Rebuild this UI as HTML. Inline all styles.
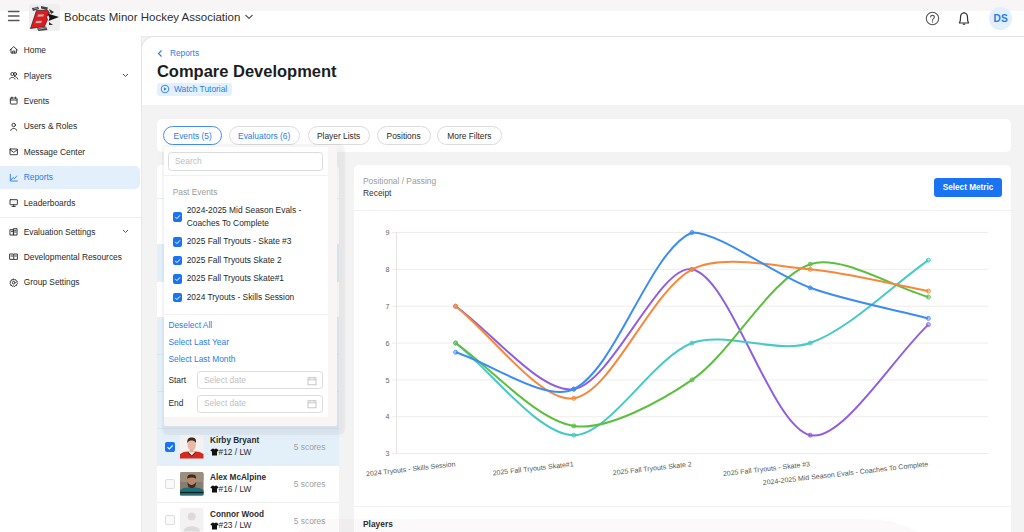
<!DOCTYPE html><html><head><meta charset='utf-8'><style>
*{margin:0;padding:0}
html,body{width:1024px;height:532px;overflow:hidden;background:#f3f3f3}
body{position:relative;font-family:"Liberation Sans",sans-serif}
.r{position:absolute}
.t{position:absolute;white-space:nowrap;line-height:1}
.pill{box-sizing:border-box;border-radius:10px;font-size:8.4px;line-height:16.7px;padding-top:0.6px;text-align:center;background:#fff}
.btn{background:#1a73f0;color:#fff;border-radius:3px;font-size:8.2px;font-weight:700;line-height:19px;text-align:center}
svg.r{overflow:visible}
</style></head><body>
<div class="r" style="left:0.00px;top:0.00px;width:1024.00px;height:532.00px;background:#f3f3f3"></div>
<div class="r" style="left:0.00px;top:0.00px;width:141.00px;height:532.00px;background:#fff"></div>
<div class="r" style="left:141.00px;top:36.00px;width:1.00px;height:496.00px;background:#e8e8e8"></div>
<div class="r" style="left:0.00px;top:0.00px;width:1024.00px;height:36.00px;background:#fff"></div>
<div class="r" style="left:0.00px;top:0.00px;width:1024.00px;height:11.00px;background:#f8f5f6"></div>
<div class="r" style="left:142.00px;top:36.00px;width:882.00px;height:1.00px;background:#ececec"></div>
<div class="r" style="left:141px;top:36px;width:883px;height:69px;background:#fff;border-left:1px solid #e4e4e4;border-top:1px solid #e4e4e4;border-top-left-radius:13px;box-sizing:border-box"></div>
<svg class="r" style="left:6px;top:8px;" width="16" height="16" viewBox="0 0 16 16"><g stroke="#555" stroke-width="1.3" stroke-linecap="round"><line x1="2.5" y1="3.5" x2="13" y2="3.5"/><line x1="2.5" y1="8" x2="13" y2="8"/><line x1="2.5" y1="12.5" x2="13" y2="12.5"/></g></svg>
<div class="r" style="left:29.00px;top:4.00px;width:31.00px;height:27.00px;background:#efefef;border-radius:3px"></div>
<svg class="r" style="left:29px;top:4px;" width="31" height="27" viewBox="0 0 31 27">
<path d="M3 4 L9 2.5 L10 5 L4 7 Z" fill="#333"/><path d="M4 3.5 L8.5 2.8 M4.5 5 L9 4" stroke="#fff" stroke-width="0.5"/>
<path d="M12 2 L19 3.5 L18 6 L12 4.5 Z" fill="#444"/>
<path d="M7.5 6.5 L18.5 6 L20.5 9 L17.5 13 L18.5 15.5 L15.5 22.5 L1.5 24.5 Z" fill="#e3191c" stroke="#222" stroke-width="0.7"/>
<path d="M9 10.5 L15 10.3 L14.3 12.5 L8.3 12.7 Z M7 17 L13 16.8 L12.3 19 L6.3 19.2 Z" fill="#b5b5b5"/>
<path d="M18.5 9.5 L30 13 L19.5 17 L20.5 14 Z" fill="#111"/>
<path d="M20 5 L25 8 L22 10 Z" fill="#333"/>
<path d="M20 18 L24 21 L20 21 Z" fill="#333"/>
<path d="M8 24.5 L17 22.5 L18.5 26 L9.5 27 Z" fill="#444"/><path d="M9.5 25.3 L17 23.8" stroke="#fff" stroke-width="0.5"/>
</svg>
<div class="t" style="left:64.00px;top:11.57px;font-size:11.5px;color:#2e2e2e;font-weight:400;">Bobcats Minor Hockey Association</div>
<svg class="r" style="left:244px;top:13px;" width="10" height="8" viewBox="0 0 10 8"><path d="M1.5 2 L5 5.5 L8.5 2" stroke="#555" stroke-width="1.1" fill="none"/></svg>
<svg class="r" style="left:925px;top:11px;" width="16" height="16" viewBox="0 0 16 16"><circle cx="7.5" cy="7.5" r="6.2" stroke="#555" stroke-width="1.1" fill="none"/><path d="M5.6 6 C5.6 3.8 9.4 3.8 9.4 6 C9.4 7.6 7.5 7.6 7.5 9.2" stroke="#555" stroke-width="1.1" fill="none" stroke-linecap="round"/><circle cx="7.5" cy="11" r="0.7" fill="#555"/></svg>
<svg class="r" style="left:957px;top:11px;" width="14" height="16" viewBox="0 0 14 16"><path d="M2.5 12 L2.8 11 C3.5 10 3.5 9 3.5 6.5 C3.5 3.8 5 2 7 2 C9 2 10.5 3.8 10.5 6.5 C10.5 9 10.5 10 11.2 11 L11.5 12 Z" stroke="#333" stroke-width="1.2" fill="none" stroke-linejoin="round"/><path d="M5.8 13.2 L8.2 13.2" stroke="#333" stroke-width="1.2"/><path d="M7 1 L7 2" stroke="#333" stroke-width="1.2"/></svg>
<div class="r" style="left:989px;top:7px;width:23.4px;height:23.4px;border-radius:50%;background:#e2f0fd"></div>
<div class="t" style="left:1000.70px;top:14.27px;font-size:10.2px;color:#2a7de9;font-weight:700;transform:translateX(-50%)">DS</div>
<div class="r" style="left:0.00px;top:166.00px;width:139.50px;height:23.20px;background:#e3f0fb;border-radius:0 5px 5px 0"></div>
<div class="r" style="left:0.00px;top:217.00px;width:141.00px;height:1.00px;background:#eee"></div>
<div class="t" style="left:23.70px;top:45.79px;font-size:8.4px;color:#2a2a2a;font-weight:400;">Home</div>
<svg class="r" style="left:9.3px;top:45.30px" width="9.4" height="9.4" viewBox="0 0 14 14"><g stroke="#2a2a2a" stroke-width="1.35" fill="none" stroke-linejoin="round" stroke-linecap="round"><path d="M1.5 7.5 L7 2.5 L12.5 7.5 M3 6.5 L3 12 L11 12 L11 6.5 M5.5 12 L5.5 9 L8.5 9 L8.5 12" /></g></svg>
<div class="t" style="left:23.70px;top:71.79px;font-size:8.4px;color:#2a2a2a;font-weight:400;">Players</div>
<svg class="r" style="left:9.3px;top:71.30px" width="9.4" height="9.4" viewBox="0 0 14 14"><g stroke="#2a2a2a" stroke-width="1.35" fill="none" stroke-linejoin="round" stroke-linecap="round"><circle cx="5" cy="4.5" r="2.3"/><path d="M1 12 C1.5 8.5 8.5 8.5 9 12"/><circle cx="9" cy="4.5" r="2.3"/><path d="M8 8 C10.5 8.5 12.5 9.5 13 12"/></g></svg>
<div class="t" style="left:23.70px;top:96.89px;font-size:8.4px;color:#2a2a2a;font-weight:400;">Events</div>
<svg class="r" style="left:9.3px;top:96.40px" width="9.4" height="9.4" viewBox="0 0 14 14"><g stroke="#2a2a2a" stroke-width="1.35" fill="none" stroke-linejoin="round" stroke-linecap="round"><rect x="2" y="3" width="10" height="9" rx="1"/><path d="M2 6 L12 6 M4.5 1.5 L4.5 4 M9.5 1.5 L9.5 4"/></g></svg>
<div class="t" style="left:23.70px;top:122.49px;font-size:8.4px;color:#2a2a2a;font-weight:400;">Users &amp; Roles</div>
<svg class="r" style="left:9.3px;top:122.00px" width="9.4" height="9.4" viewBox="0 0 14 14"><g stroke="#2a2a2a" stroke-width="1.35" fill="none" stroke-linejoin="round" stroke-linecap="round"><circle cx="7" cy="4.5" r="2.6"/><path d="M2.5 12.5 C3 8.5 11 8.5 11.5 12.5"/></g></svg>
<div class="t" style="left:23.70px;top:147.69px;font-size:8.4px;color:#2a2a2a;font-weight:400;">Message Center</div>
<svg class="r" style="left:9.3px;top:147.20px" width="9.4" height="9.4" viewBox="0 0 14 14"><g stroke="#2a2a2a" stroke-width="1.35" fill="none" stroke-linejoin="round" stroke-linecap="round"><rect x="1.5" y="3" width="11" height="8.5" rx="0.5"/><path d="M1.5 4 L7 8 L12.5 4"/></g></svg>
<div class="t" style="left:23.70px;top:173.39px;font-size:8.4px;color:#2a7de9;font-weight:400;">Reports</div>
<svg class="r" style="left:9.3px;top:172.90px" width="9.4" height="9.4" viewBox="0 0 14 14"><g stroke="#2a7de9" stroke-width="1.35" fill="none" stroke-linejoin="round" stroke-linecap="round"><path d="M2 2 L2 12 L12.5 12 M3.5 10 L6 6.5 L8 8.5 L11.5 4.5"/></g></svg>
<div class="t" style="left:23.70px;top:198.89px;font-size:8.4px;color:#2a2a2a;font-weight:400;">Leaderboards</div>
<svg class="r" style="left:9.3px;top:198.40px" width="9.4" height="9.4" viewBox="0 0 14 14"><g stroke="#2a2a2a" stroke-width="1.35" fill="none" stroke-linejoin="round" stroke-linecap="round"><rect x="1.5" y="2.5" width="11" height="7.5" rx="0.5"/><path d="M7 10 L7 12.5 M4.5 12.5 L9.5 12.5"/></g></svg>
<div class="t" style="left:23.70px;top:227.69px;font-size:8.4px;color:#2a2a2a;font-weight:400;">Evaluation Settings</div>
<svg class="r" style="left:9.3px;top:227.20px" width="9.4" height="9.4" viewBox="0 0 14 14"><g stroke="#2a2a2a" stroke-width="1.35" fill="none" stroke-linejoin="round" stroke-linecap="round"><rect x="2" y="4" width="5" height="8"/><rect x="7" y="2.5" width="5" height="9.5"/><path d="M3.5 6.5 L5.5 6.5 M8.5 5 L10.5 5 M8.5 7.5 L10.5 7.5"/></g></svg>
<div class="t" style="left:23.70px;top:252.69px;font-size:8.4px;color:#2a2a2a;font-weight:400;">Developmental Resources</div>
<svg class="r" style="left:9.3px;top:252.20px" width="9.4" height="9.4" viewBox="0 0 14 14"><g stroke="#2a2a2a" stroke-width="1.35" fill="none" stroke-linejoin="round" stroke-linecap="round"><path d="M1.5 3 L6.5 3 L7 3.5 L7.5 3 L12.5 3 L12.5 11 L7.5 11 L7 11.5 L6.5 11 L1.5 11 Z M7 3.5 L7 11"/><path d="M3 6 L5.5 6 M8.5 6 L11 6"/></g></svg>
<div class="t" style="left:23.70px;top:278.39px;font-size:8.4px;color:#2a2a2a;font-weight:400;">Group Settings</div>
<svg class="r" style="left:9.3px;top:277.90px" width="9.4" height="9.4" viewBox="0 0 14 14"><g stroke="#2a2a2a" stroke-width="1.35" fill="none" stroke-linejoin="round" stroke-linecap="round"><circle cx="7" cy="7" r="2"/><path d="M7 1.5 L8.2 2.8 L10 2.4 L10.5 4.2 L12.3 4.8 L11.8 6.6 L12.8 8 L11.4 9.2 L11.5 11 L9.6 11.2 L8.6 12.7 L7 11.8 L5.4 12.7 L4.4 11.2 L2.5 11 L2.6 9.2 L1.2 8 L2.2 6.6 L1.7 4.8 L3.5 4.2 L4 2.4 L5.8 2.8 Z"/></g></svg>
<svg class="r" style="left:121px;top:71.9px;" width="9" height="7" viewBox="0 0 9 7"><path d="M2 2 L4.5 4.5 L7 2" stroke="#555" stroke-width="1" fill="none"/></svg>
<svg class="r" style="left:121px;top:227.8px;" width="9" height="7" viewBox="0 0 9 7"><path d="M2 2 L4.5 4.5 L7 2" stroke="#555" stroke-width="1" fill="none"/></svg>
<svg class="r" style="left:156px;top:49px;" width="8" height="9" viewBox="0 0 8 9"><path d="M5.5 1.5 L2.5 4.5 L5.5 7.5" stroke="#2a7de9" stroke-width="1.1" fill="none"/></svg>
<div class="t" style="left:170.00px;top:49.27px;font-size:8.3px;color:#2a7de9;font-weight:400;">Reports</div>
<div class="t" style="left:156.90px;top:63.03px;font-size:16.5px;color:#1d1d1d;font-weight:700;">Compare Development</div>
<div class="r" style="left:157.00px;top:82.50px;width:75.00px;height:13.10px;background:#e4f0fc;border-radius:3px"></div>
<svg class="r" style="left:160px;top:84px;" width="10" height="10" viewBox="0 0 10 10"><circle cx="5" cy="5" r="3.8" stroke="#2a7de9" stroke-width="0.9" fill="none"/><path d="M4 3.3 L6.6 5 L4 6.7 Z" fill="#2a7de9"/></svg>
<div class="t" style="left:174.00px;top:84.89px;font-size:8.4px;color:#2a7de9;font-weight:400;">Watch Tutorial</div>
<div class="r" style="left:157.00px;top:119.00px;width:854.00px;height:33.00px;background:#fff;border-radius:5px"></div>
<div class="r pill" style="left:163.4px;top:126px;width:58.599999999999994px;height:18.7px;border:1px solid #4a90f0;color:#2a7de9">Events (5)</div>
<div class="r pill" style="left:228.6px;top:126px;width:71.1px;height:18.7px;border:1px solid #dcdcdc;color:#2a7de9">Evaluators (6)</div>
<div class="r pill" style="left:307.5px;top:126px;width:62.19999999999999px;height:18.7px;border:1px solid #dcdcdc;color:#2a2a2a">Player Lists</div>
<div class="r pill" style="left:376.6px;top:126px;width:54.0px;height:18.7px;border:1px solid #dcdcdc;color:#2a2a2a">Positions</div>
<div class="r pill" style="left:437.2px;top:126px;width:64.40000000000003px;height:18.7px;border:1px solid #dcdcdc;color:#2a2a2a">More Filters</div>
<div class="r" style="left:157.00px;top:165.00px;width:182.00px;height:367.00px;background:#fff;border-radius:5px 5px 0 0"></div>
<div class="r" style="left:157.00px;top:198.00px;width:182.00px;height:1.00px;background:#eee"></div>
<div class="r" style="left:157.00px;top:244.40px;width:182.00px;height:36.60px;background:#e3eff9"></div>
<div class="r" style="left:157.00px;top:317.00px;width:182.00px;height:148.00px;background:#e3eff9"></div>
<div class="r" style="left:157.00px;top:354.00px;width:182.00px;height:1.00px;background:#d9e6f1"></div>
<div class="r" style="left:157.00px;top:391.00px;width:182.00px;height:1.00px;background:#d9e6f1"></div>
<div class="r" style="left:157.00px;top:428.00px;width:182.00px;height:1.00px;background:#d9e6f1"></div>
<div class="r" style="left:157.00px;top:281.00px;width:182.00px;height:1.00px;background:#f0eded"></div>
<div class="r" style="left:157.00px;top:317.00px;width:182.00px;height:1.00px;background:#f0eded"></div>
<div class="r" style="left:157.00px;top:465.00px;width:182.00px;height:1.00px;background:#f0eded"></div>
<div class="r" style="left:157.00px;top:501.50px;width:182.00px;height:1.00px;background:#f0eded"></div>
<div class="r" style="left:165.20px;top:441.50px;width:10.10px;height:10.00px;background:#1a73f0;border-radius:2px"></div>
<svg class="r" style="left:165px;top:441.5px;" width="10" height="10" viewBox="0 0 10 10"><path d="M2.5 5.2 L4.3 7 L7.8 3.3" stroke="#fff" stroke-width="1.1" fill="none"/></svg>
<svg class="r" style="left:179.5px;top:434.7px;" width="23.5" height="23.5" viewBox="0 0 23.5 23.5"><rect width="23.5" height="23.5" rx="2" fill="#f4f1f0"/><path d="M0 23.5 L0 19 C4 16 8 16 11.7 17 C15.5 16 19.5 16 23.5 19 L23.5 23.5 Z" fill="#d42a1f"/><path d="M8.5 17 L11.7 20.5 L15 17" fill="#fff"/><path d="M8 17.5 L11.7 21 L15.5 17.5" stroke="#222" stroke-width="0.8" fill="none"/><ellipse cx="11.7" cy="10" rx="4.2" ry="5.5" fill="#e8b9a4"/><path d="M7.3 8 C7 3.5 9 2.5 11.7 2.5 C14.5 2.5 16.5 3.5 16 8 C15 6 13 5.5 11.7 5.5 C10 5.5 8.5 6 7.3 8 Z" fill="#3a2a22"/><rect x="10" y="14.5" width="3.4" height="3" fill="#e0ad98"/></svg>
<div class="t" style="left:210.00px;top:437.06px;font-size:8.2px;color:#2b2b2b;font-weight:700;">Kirby Bryant</div>
<svg class="r" style="left:209.5px;top:448.1px;" width="9" height="8" viewBox="0 0 9 8"><path d="M2.2 0.8 L3.3 0.5 C3.8 1.6 5.2 1.6 5.7 0.5 L6.8 0.8 L8.6 2.2 L7.7 3.6 L7 3.3 L7 7.6 L2 7.6 L2 3.3 L1.3 3.6 L0.4 2.2 Z" fill="#111"/></svg>
<div class="t" style="left:218.50px;top:447.59px;font-size:8.4px;color:#2b2b2b;font-weight:400;">#12 / LW</div>
<div class="t" style="left:293.80px;top:443.19px;font-size:8.4px;color:#a0a0a0;font-weight:400;">5 scores</div>
<div class="r" style="left:165.20px;top:478.50px;width:10.10px;height:10.00px;background:#fafafa;border:1px solid #dedede;border-radius:2px;box-sizing:border-box"></div>
<svg class="r" style="left:179.5px;top:471.7px;" width="23.5" height="23.5" viewBox="0 0 23.5 23.5"><rect width="23.5" height="23.5" rx="2" fill="#8a7c6e"/><rect width="23.5" height="10" rx="2" fill="#9c8f80"/><path d="M0 23.5 L0 18 C4 15 8 15 11.7 16 C15.5 15 19.5 15 23.5 18 L23.5 23.5 Z" fill="#1f6f78"/><path d="M0 20.5 L23.5 20.5" stroke="#1a1a1a" stroke-width="1.2"/><ellipse cx="11.7" cy="9.5" rx="4.3" ry="5.5" fill="#b98868"/><path d="M7.5 10 C7.5 15 9 16 11.7 16 C14.5 16 16 15 16 10 C15 12 13 13 11.7 13 C10 13 8.5 12 7.5 10 Z" fill="#3e2a1e"/><path d="M7.3 7 C7 3 9 2.5 11.7 2.5 C14.5 2.5 16.5 3 16 7 C15 5 8.5 5 7.3 7 Z" fill="#3e2a1e"/></svg>
<div class="t" style="left:210.00px;top:474.06px;font-size:8.2px;color:#2b2b2b;font-weight:700;">Alex McAlpine</div>
<svg class="r" style="left:209.5px;top:485.1px;" width="9" height="8" viewBox="0 0 9 8"><path d="M2.2 0.8 L3.3 0.5 C3.8 1.6 5.2 1.6 5.7 0.5 L6.8 0.8 L8.6 2.2 L7.7 3.6 L7 3.3 L7 7.6 L2 7.6 L2 3.3 L1.3 3.6 L0.4 2.2 Z" fill="#111"/></svg>
<div class="t" style="left:218.50px;top:484.59px;font-size:8.4px;color:#2b2b2b;font-weight:400;">#16 / LW</div>
<div class="t" style="left:293.80px;top:480.19px;font-size:8.4px;color:#a0a0a0;font-weight:400;">5 scores</div>
<div class="r" style="left:165.20px;top:515.00px;width:10.10px;height:10.00px;background:#fafafa;border:1px solid #dedede;border-radius:2px;box-sizing:border-box"></div>
<svg class="r" style="left:179.5px;top:508.2px;" width="23.5" height="23.5" viewBox="0 0 23.5 23.5"><rect width="23.5" height="23.5" rx="2" fill="#f3f1f1"/><circle cx="11.7" cy="8.5" r="4" fill="#dcdada"/><path d="M3.5 23.5 C4 16.5 19.5 16.5 20 23.5 Z" fill="#dcdada"/></svg>
<div class="t" style="left:210.00px;top:510.56px;font-size:8.2px;color:#2b2b2b;font-weight:700;">Connor Wood</div>
<svg class="r" style="left:209.5px;top:521.6px;" width="9" height="8" viewBox="0 0 9 8"><path d="M2.2 0.8 L3.3 0.5 C3.8 1.6 5.2 1.6 5.7 0.5 L6.8 0.8 L8.6 2.2 L7.7 3.6 L7 3.3 L7 7.6 L2 7.6 L2 3.3 L1.3 3.6 L0.4 2.2 Z" fill="#111"/></svg>
<div class="t" style="left:218.50px;top:521.09px;font-size:8.4px;color:#2b2b2b;font-weight:400;">#23 / LW</div>
<div class="t" style="left:293.80px;top:516.69px;font-size:8.4px;color:#a0a0a0;font-weight:400;">5 scores</div>
<div class="r" style="left:354.00px;top:165.00px;width:657.00px;height:367.00px;background:#fff;border-radius:5px 5px 0 0"></div>
<div class="t" style="left:363.00px;top:176.89px;font-size:8.4px;color:#9a9a9a;font-weight:400;">Positional / Passing</div>
<div class="t" style="left:363.00px;top:188.89px;font-size:8.4px;color:#333;font-weight:400;">Receipt</div>
<div class="r btn" style="left:934px;top:178px;width:68px;height:19px">Select Metric</div>
<div class="r" style="left:354.00px;top:209.70px;width:657.00px;height:1.00px;background:#f0eeee"></div>
<div class="r" style="left:354.00px;top:505.50px;width:657.00px;height:1.00px;background:#f2f0f0"></div>
<div class="t" style="left:363.00px;top:519.69px;font-size:8.4px;color:#2b2b2b;font-weight:700;">Players</div>
<svg class="r" style="left:0px;top:0px;font-family:'Liberation Sans',sans-serif" width="1024" height="532" viewBox="0 0 1024 532"><line x1="392" y1="453.60" x2="988.0" y2="453.60" stroke="#efebeb" stroke-width="1"/><line x1="392" y1="416.75" x2="988.0" y2="416.75" stroke="#efebeb" stroke-width="1"/><line x1="392" y1="379.90" x2="988.0" y2="379.90" stroke="#efebeb" stroke-width="1"/><line x1="392" y1="343.05" x2="988.0" y2="343.05" stroke="#efebeb" stroke-width="1"/><line x1="392" y1="306.20" x2="988.0" y2="306.20" stroke="#efebeb" stroke-width="1"/><line x1="392" y1="269.35" x2="988.0" y2="269.35" stroke="#efebeb" stroke-width="1"/><line x1="392" y1="232.50" x2="988.0" y2="232.50" stroke="#efebeb" stroke-width="1"/><line x1="396.5" y1="232.5" x2="396.5" y2="453.6" stroke="#e6e3e3" stroke-width="1"/><text x="389.5" y="456.20" font-size="7.2" text-anchor="end" fill="#666">3</text><text x="389.5" y="419.35" font-size="7.2" text-anchor="end" fill="#666">4</text><text x="389.5" y="382.50" font-size="7.2" text-anchor="end" fill="#666">5</text><text x="389.5" y="345.65" font-size="7.2" text-anchor="end" fill="#666">6</text><text x="389.5" y="308.80" font-size="7.2" text-anchor="end" fill="#666">7</text><text x="389.5" y="271.95" font-size="7.2" text-anchor="end" fill="#666">8</text><text x="389.5" y="235.10" font-size="7.2" text-anchor="end" fill="#666">9</text><text transform="translate(455.60,466.20) rotate(-6.5)" font-size="7" text-anchor="end" fill="#555">2024 Tryouts - Skills Session</text><text transform="translate(573.80,466.20) rotate(-6.5)" font-size="7" text-anchor="end" fill="#555">2025 Fall Tryouts Skate#1</text><text transform="translate(692.00,466.20) rotate(-6.5)" font-size="7" text-anchor="end" fill="#555">2025 Fall Tryouts Skate 2</text><text transform="translate(810.20,466.20) rotate(-6.5)" font-size="7" text-anchor="end" fill="#555">2025 Fall Tryouts - Skate #3</text><text transform="translate(928.40,466.20) rotate(-6.5)" font-size="7" text-anchor="end" fill="#555">2024-2025 Mid Season Evals - Coaches To Complete</text><path d="M455.60,306.20 C491.06,331.07 541.05,394.22 573.80,389.11 C611.97,383.16 659.91,263.10 692.00,269.35 C730.83,276.92 770.68,425.94 810.20,435.18 C841.60,442.52 892.94,357.79 928.40,324.62" stroke="#8f5fe0" stroke-width="2" fill="none"/>
<circle cx="455.60" cy="306.20" r="2" fill="#8f5fe0" fill-opacity="0.35" stroke="#8f5fe0" stroke-width="0.9"/>
<circle cx="573.80" cy="389.11" r="2" fill="#8f5fe0" fill-opacity="0.35" stroke="#8f5fe0" stroke-width="0.9"/>
<circle cx="692.00" cy="269.35" r="2" fill="#8f5fe0" fill-opacity="0.35" stroke="#8f5fe0" stroke-width="0.9"/>
<circle cx="810.20" cy="435.18" r="2" fill="#8f5fe0" fill-opacity="0.35" stroke="#8f5fe0" stroke-width="0.9"/>
<circle cx="928.40" cy="324.62" r="2" fill="#8f5fe0" fill-opacity="0.35" stroke="#8f5fe0" stroke-width="0.9"/>
<path d="M455.60,343.05 C491.06,370.69 538.34,435.18 573.80,435.18 C609.26,435.18 652.35,358.50 692.00,343.05 C723.27,330.86 778.28,354.25 810.20,343.05 C849.20,329.37 892.94,285.01 928.40,260.14" stroke="#47c9c6" stroke-width="2" fill="none"/>
<circle cx="455.60" cy="343.05" r="2" fill="#47c9c6" fill-opacity="0.35" stroke="#47c9c6" stroke-width="0.9"/>
<circle cx="573.80" cy="435.18" r="2" fill="#47c9c6" fill-opacity="0.35" stroke="#47c9c6" stroke-width="0.9"/>
<circle cx="692.00" cy="343.05" r="2" fill="#47c9c6" fill-opacity="0.35" stroke="#47c9c6" stroke-width="0.9"/>
<circle cx="810.20" cy="343.05" r="2" fill="#47c9c6" fill-opacity="0.35" stroke="#47c9c6" stroke-width="0.9"/>
<circle cx="928.40" cy="260.14" r="2" fill="#47c9c6" fill-opacity="0.35" stroke="#47c9c6" stroke-width="0.9"/>
<path d="M455.60,343.05 C491.06,367.92 536.05,420.08 573.80,425.96 C606.97,431.13 661.22,400.97 692.00,379.90 C732.14,352.43 769.48,278.47 810.20,264.19 C840.40,253.60 892.94,287.15 928.40,296.99" stroke="#5dbf3f" stroke-width="2" fill="none"/>
<circle cx="455.60" cy="343.05" r="2" fill="#5dbf3f" fill-opacity="0.35" stroke="#5dbf3f" stroke-width="0.9"/>
<circle cx="573.80" cy="425.96" r="2" fill="#5dbf3f" fill-opacity="0.35" stroke="#5dbf3f" stroke-width="0.9"/>
<circle cx="692.00" cy="379.90" r="2" fill="#5dbf3f" fill-opacity="0.35" stroke="#5dbf3f" stroke-width="0.9"/>
<circle cx="810.20" cy="264.19" r="2" fill="#5dbf3f" fill-opacity="0.35" stroke="#5dbf3f" stroke-width="0.9"/>
<circle cx="928.40" cy="296.99" r="2" fill="#5dbf3f" fill-opacity="0.35" stroke="#5dbf3f" stroke-width="0.9"/>
<path d="M455.60,306.20 C491.06,333.84 541.08,403.43 573.80,398.33 C612.00,392.37 649.68,292.44 692.00,269.35 C720.60,253.75 775.03,266.12 810.20,269.35 C845.95,272.64 892.94,284.57 928.40,291.09" stroke="#f6883a" stroke-width="2" fill="none"/>
<circle cx="455.60" cy="306.20" r="2" fill="#f6883a" fill-opacity="0.35" stroke="#f6883a" stroke-width="0.9"/>
<circle cx="573.80" cy="398.33" r="2" fill="#f6883a" fill-opacity="0.35" stroke="#f6883a" stroke-width="0.9"/>
<circle cx="692.00" cy="269.35" r="2" fill="#f6883a" fill-opacity="0.35" stroke="#f6883a" stroke-width="0.9"/>
<circle cx="810.20" cy="269.35" r="2" fill="#f6883a" fill-opacity="0.35" stroke="#f6883a" stroke-width="0.9"/>
<circle cx="928.40" cy="291.09" r="2" fill="#f6883a" fill-opacity="0.35" stroke="#f6883a" stroke-width="0.9"/>
<path d="M455.60,352.26 C491.06,363.32 546.36,403.01 573.80,389.11 C617.28,367.08 649.41,250.76 692.00,232.50 C720.33,232.50 773.56,274.47 810.20,287.77 C844.48,300.23 892.94,309.18 928.40,318.36" stroke="#3b8ef0" stroke-width="2" fill="none"/>
<circle cx="455.60" cy="352.26" r="2" fill="#3b8ef0" fill-opacity="0.35" stroke="#3b8ef0" stroke-width="0.9"/>
<circle cx="573.80" cy="389.11" r="2" fill="#3b8ef0" fill-opacity="0.35" stroke="#3b8ef0" stroke-width="0.9"/>
<circle cx="692.00" cy="232.50" r="2" fill="#3b8ef0" fill-opacity="0.35" stroke="#3b8ef0" stroke-width="0.9"/>
<circle cx="810.20" cy="287.77" r="2" fill="#3b8ef0" fill-opacity="0.35" stroke="#3b8ef0" stroke-width="0.9"/>
<circle cx="928.40" cy="318.36" r="2" fill="#3b8ef0" fill-opacity="0.35" stroke="#3b8ef0" stroke-width="0.9"/></svg>
<div class="r" style="left:290px;top:518.5px;width:645px;height:60px;border-radius:40px 70px 0 0/30px 40px 0 0;background:rgba(140,90,90,0.035)"></div>
<div class="r" style="left:163.6px;top:144.8px;width:173.6px;height:281.6px;background:#f8f5f5;border-radius:2px;box-shadow:3px 4px 1px 5px rgba(0,0,0,0.035), 3px 5px 6px 5px rgba(0,0,0,0.02)"></div>
<div class="r" style="left:163.60px;top:147.30px;width:164.10px;height:269.40px;background:#fff"></div>
<div class="r" style="left:168.4px;top:152px;width:154.6px;height:18.5px;border:1px solid #dcdcdc;border-radius:3.5px;box-sizing:border-box"></div>
<div class="t" style="left:175.00px;top:156.69px;font-size:8.4px;color:#bdbdbd;font-weight:400;">Search</div>
<div class="r" style="left:164.00px;top:175.00px;width:163.50px;height:1.00px;background:#f2f0f0"></div>
<div class="t" style="left:172.70px;top:187.59px;font-size:8.4px;color:#9c9c9c;font-weight:400;">Past Events</div>
<div class="r" style="left:172.70px;top:212.00px;width:9.00px;height:9.50px;background:#1a73f0;border-radius:2px"></div>
<svg class="r" style="left:172.7px;top:212px;" width="9" height="9.5" viewBox="0 0 9 9.5"><path d="M2.2 4.9 L3.9 6.6 L7 3.3" stroke="#fff" stroke-width="1" fill="none"/></svg>
<div class="t" style="left:186.70px;top:206.39px;font-size:8.4px;color:#2a2a2a;font-weight:400;">2024-2025 Mid Season Evals -</div>
<div class="t" style="left:186.70px;top:219.09px;font-size:8.4px;color:#2a2a2a;font-weight:400;">Coaches To Complete</div>
<div class="r" style="left:172.70px;top:237.10px;width:9.00px;height:9.50px;background:#1a73f0;border-radius:2px"></div>
<svg class="r" style="left:172.7px;top:237.10000000000002px;" width="9" height="9.5" viewBox="0 0 9 9.5"><path d="M2.2 4.9 L3.9 6.6 L7 3.3" stroke="#fff" stroke-width="1" fill="none"/></svg>
<div class="t" style="left:186.70px;top:237.19px;font-size:8.4px;color:#2a2a2a;font-weight:400;">2025 Fall Tryouts - Skate #3</div>
<div class="r" style="left:172.70px;top:255.60px;width:9.00px;height:9.50px;background:#1a73f0;border-radius:2px"></div>
<svg class="r" style="left:172.7px;top:255.60000000000002px;" width="9" height="9.5" viewBox="0 0 9 9.5"><path d="M2.2 4.9 L3.9 6.6 L7 3.3" stroke="#fff" stroke-width="1" fill="none"/></svg>
<div class="t" style="left:186.70px;top:255.69px;font-size:8.4px;color:#2a2a2a;font-weight:400;">2025 Fall Tryouts Skate 2</div>
<div class="r" style="left:172.70px;top:274.40px;width:9.00px;height:9.50px;background:#1a73f0;border-radius:2px"></div>
<svg class="r" style="left:172.7px;top:274.40000000000003px;" width="9" height="9.5" viewBox="0 0 9 9.5"><path d="M2.2 4.9 L3.9 6.6 L7 3.3" stroke="#fff" stroke-width="1" fill="none"/></svg>
<div class="t" style="left:186.70px;top:274.49px;font-size:8.4px;color:#2a2a2a;font-weight:400;">2025 Fall Tryouts Skate#1</div>
<div class="r" style="left:172.70px;top:292.80px;width:9.00px;height:9.50px;background:#1a73f0;border-radius:2px"></div>
<svg class="r" style="left:172.7px;top:292.8px;" width="9" height="9.5" viewBox="0 0 9 9.5"><path d="M2.2 4.9 L3.9 6.6 L7 3.3" stroke="#fff" stroke-width="1" fill="none"/></svg>
<div class="t" style="left:186.70px;top:292.89px;font-size:8.4px;color:#2a2a2a;font-weight:400;">2024 Tryouts - Skills Session</div>
<div class="r" style="left:164.00px;top:313.60px;width:163.50px;height:1.00px;background:#f2f0f0"></div>
<div class="t" style="left:168.40px;top:320.89px;font-size:8.4px;color:#2a7de9;font-weight:400;">Deselect All</div>
<div class="t" style="left:168.40px;top:338.29px;font-size:8.4px;color:#2a7de9;font-weight:400;">Select Last Year</div>
<div class="t" style="left:168.40px;top:355.49px;font-size:8.4px;color:#2a7de9;font-weight:400;">Select Last Month</div>
<div class="t" style="left:168.40px;top:376.29px;font-size:8.4px;color:#2a2a2a;font-weight:400;">Start</div>
<div class="t" style="left:168.40px;top:399.49px;font-size:8.4px;color:#2a2a2a;font-weight:400;">End</div>
<div class="r" style="left:197.2px;top:371.4px;width:125.8px;height:18.1px;border:1px solid #dcdcdc;border-radius:3.5px;box-sizing:border-box"></div>
<div class="t" style="left:204.00px;top:376.29px;font-size:8.4px;color:#c0c0c0;font-weight:400;">Select date</div>
<svg class="r" style="left:307px;top:375.9px;" width="10" height="10" viewBox="0 0 10 10"><g stroke="#bbb" stroke-width="0.8" fill="none"><rect x="1" y="1.8" width="8" height="7"/><path d="M1 3.8 L9 3.8 M3 0.8 L3 2.5 M7 0.8 L7 2.5"/></g></svg>
<div class="r" style="left:197.2px;top:394.6px;width:125.8px;height:18.1px;border:1px solid #dcdcdc;border-radius:3.5px;box-sizing:border-box"></div>
<div class="t" style="left:204.00px;top:399.49px;font-size:8.4px;color:#c0c0c0;font-weight:400;">Select date</div>
<svg class="r" style="left:307px;top:399.1px;" width="10" height="10" viewBox="0 0 10 10"><g stroke="#bbb" stroke-width="0.8" fill="none"><rect x="1" y="1.8" width="8" height="7"/><path d="M1 3.8 L9 3.8 M3 0.8 L3 2.5 M7 0.8 L7 2.5"/></g></svg>
</body></html>
